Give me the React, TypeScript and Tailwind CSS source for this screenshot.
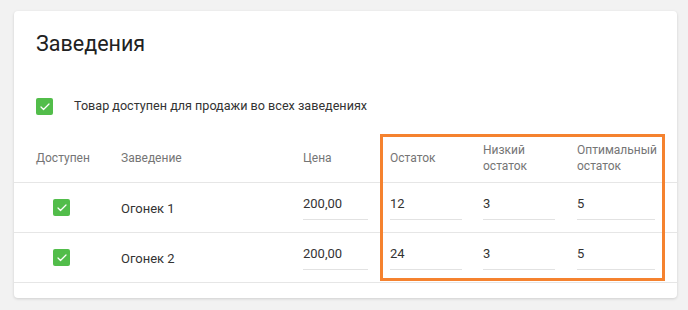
import { Check } from "lucide-react";

const rows = [
  { name: "Огонек 1", price: "200,00", stock: "12", low: "3", optimal: "5" },
  { name: "Огонек 2", price: "200,00", stock: "24", low: "3", optimal: "5" },
];

const cols = "grid grid-cols-[85px_182px_87px_93px_94px_1fr] pl-[22px] pr-[22px]";

function Box() {
  return (
    <div className="w-[17px] h-[17px] rounded-[2px] bg-[#52bd4a] flex items-center justify-center">
      <Check className="w-[12px] h-[12px] text-white" strokeWidth={2.5} />
    </div>
  );
}

function Field({ value, w }: { value: string; w: string }) {
  return (
    <div className={`${w} pb-[7px] leading-[16px] border-b border-[#e2e2e2] text-[13px] text-[#333]`}>
      {value}
    </div>
  );
}

export default function App() {
  return (
    <div className="min-h-[310px] bg-[#f2f2f2] pt-[11px] pl-[14px] pr-[11px] font-['Roboto',sans-serif]">
      <div className="relative bg-white rounded-[4px] shadow-[0_1px_3px_rgba(0,0,0,0.15)] h-[287px] pt-[19px]">
        <h1 className="pl-[22px] text-[21.5px] leading-[28px] text-[#212121]">Заведения</h1>

        <div className="flex items-center pl-[22px] mt-[40px] h-[17px]">
          <Box />
          <span className="ml-[21px] text-[12.6px] text-[#333]">
            Товар доступен для продажи во всех заведениях
          </span>
        </div>

        <div className={`${cols} mt-[18px] h-[50px] items-center border-b border-[#e6e6e6] text-[12px] leading-[16px] text-[#757575]`}>
          <div>Доступен</div>
          <div>Заведение</div>
          <div>Цена</div>
          <div>Остаток</div>
          <div>Низкий<br />остаток</div>
          <div>Оптимальный<br />остаток</div>
        </div>

        {rows.map((r) => (
          <div key={r.name} className={`${cols} h-[50px] items-center border-b border-[#e6e6e6]`}>
            <div className="pl-[17px]"><Box /></div>
            <div className="text-[13px] text-[#333] pt-[2px]">{r.name}</div>
            <Field value={r.price} w="w-[65px]" />
            <Field value={r.stock} w="w-[72px]" />
            <Field value={r.low} w="w-[72px]" />
            <Field value={r.optimal} w="w-[78px]" />
          </div>
        ))}

        <div className="absolute left-[366px] top-[123px] w-[285px] h-[147px] border-[3px] border-[#f5822f]" />
      </div>
    </div>
  );
}
